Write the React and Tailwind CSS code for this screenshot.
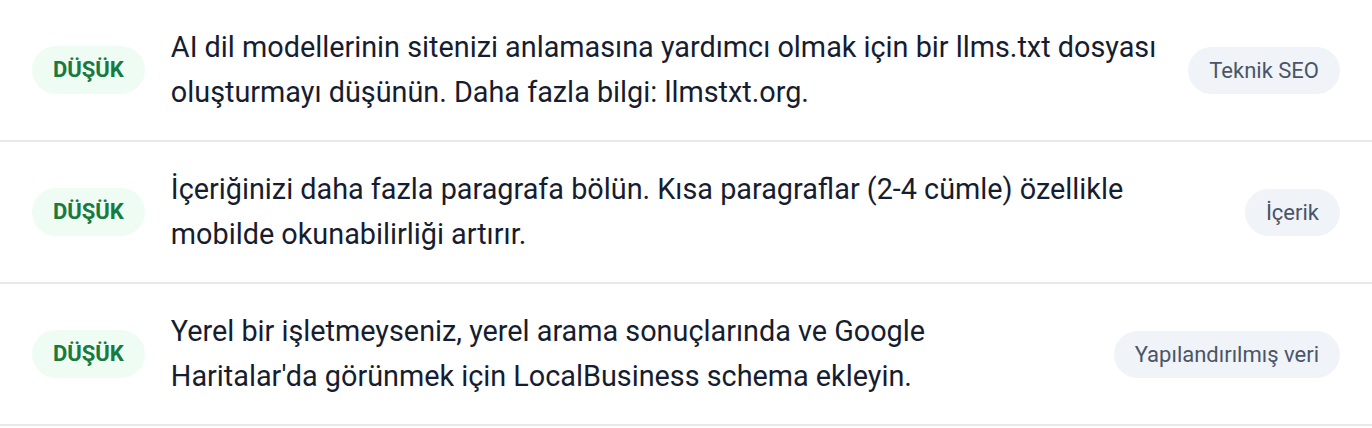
const items = [
  {
    lines: [
      "AI dil modellerinin sitenizi anlamasına yardımcı olmak için bir llms.txt dosyası",
      "oluşturmayı düşünün. Daha fazla bilgi: llmstxt.org.",
    ],
    tag: "Teknik SEO",
  },
  {
    lines: [
      "İçeriğinizi daha fazla paragrafa bölün. Kısa paragraflar (2-4 cümle) özellikle",
      "mobilde okunabilirliği artırır.",
    ],
    tag: "İçerik",
  },
  {
    lines: [
      "Yerel bir işletmeyseniz, yerel arama sonuçlarında ve Google",
      "Haritalar'da görünmek için LocalBusiness schema ekleyin.",
    ],
    tag: "Yapılandırılmış veri",
  },
];

function Recommendation({ lines, tag }) {
  return (
    <li className="flex items-center gap-[26px] border-b-2 border-[#e6e9ef] pl-8 pr-8 py-[25px]">
      <span className="shrink-0 rounded-full bg-[#effcf3] px-[21px] py-[11px] text-[22px] font-bold leading-[26px] text-[#177a3f]">
        DÜŞÜK
      </span>
      <p className="flex-1 min-w-0 text-[28.8px] leading-[45px] text-[#161d30]">
        {lines.map((line, i) => (
          <span key={i} className="block whitespace-nowrap">
            {line}
          </span>
        ))}
      </p>
      <span className="shrink-0 rounded-full bg-[#f0f3f8] px-[21px] py-[10px] text-[22px] leading-[27px] text-[#4a5568]">
        {tag}
      </span>
    </li>
  );
}

export default function App() {
  return (
    <div className="w-full bg-white" style={{ fontFamily: "Roboto, sans-serif" }}>
      <ul>
        {items.map((item) => (
          <Recommendation key={item.tag} {...item} />
        ))}
      </ul>
    </div>
  );
}
